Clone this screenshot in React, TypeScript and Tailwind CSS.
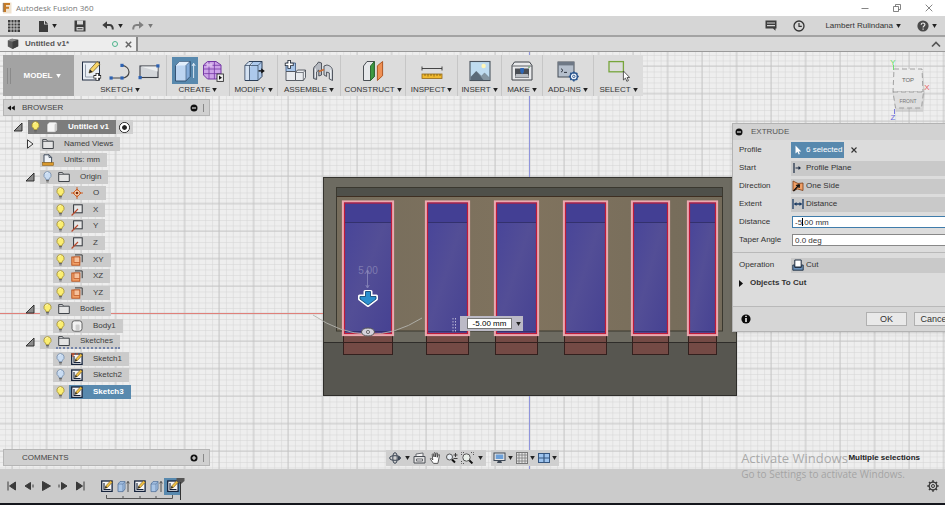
import { useState } from 'react';
import type { ReactNode } from 'react';

type IconProps = { className?: string };

/* ---------- small shared glyphs ---------- */

function Caret({ className = 'text-[#222]' }: IconProps) {
  return (
    <svg viewBox="0 0 5 4" className={`h-1 w-[5px] shrink-0 ${className}`} aria-hidden="true">
      <path d="M0.2 0h4.6L2.5 4z" fill="currentColor" />
    </svg>
  );
}

function Bulb({ on = true }: { on?: boolean }) {
  return (
    <svg viewBox="0 0 9 12" className="h-3 w-[9px]" aria-hidden="true">
      <path
        d="M4.5 0.6a3.6 3.6 0 0 0-2 6.6l.5 1.5h3l.5-1.5a3.6 3.6 0 0 0-2-6.6z"
        fill={on ? '#fbee72' : '#c9dcf2'}
        stroke={on ? '#a08b2c' : '#7089a8'}
        strokeWidth="0.8"
      />
      <path d="M3 2.4a1.6 1.6 0 0 1 1.5-.8" fill="none" stroke="#fff" strokeWidth="0.9" />
      <path d="M3.1 9.5h2.8M3.3 10.9h2.4" stroke="#666" strokeWidth="1" />
    </svg>
  );
}

function Folder() {
  return (
    <svg viewBox="0 0 12 12" className="h-3 w-3" aria-hidden="true">
      <path d="M0.7 10.5V1.6h3.8l1 1.6h5.800v7.300z" fill="#e4e4e4" stroke="#30343a" strokeWidth="0.9" />
      <path d="M1 3.400h4.600" stroke="#30343a" strokeWidth="0.7" />
    </svg>
  );
}

function SketchIcon({ fixed = false }: { fixed?: boolean }) {
  return (
    <svg viewBox="0 0 12 12" className="h-3 w-3" aria-hidden="true">
      <rect x="0.7" y="1" width="10.4" height="10.4" fill="#f5f5f5" stroke="#15233c" strokeWidth="1.3" />
      <path d="M3 3v6.5h6.5" fill="none" stroke="#15233c" strokeWidth="1.1" />
      <path d="M4 8.3l.8-2.4L9.6.7l1.7 1.5L6.4 7.5z" fill="#f4c542" stroke="#6b4a12" strokeWidth="0.6" />
      <path d="M4 8.3l.8-2.4 1.6 1.6z" fill="#222" />
      {fixed && <path d="M0 1h4M2 0v4M5 1h2" stroke="#c8502a" strokeWidth="1.2" />}
    </svg>
  );
}

function BoxIcon() {
  return (
    <svg viewBox="0 0 12 12" className="h-3 w-3" aria-hidden="true">
      <path d="M1 3.4L3.4 1h6l1.8 1V9L9 11.3H1z" fill="#f4f4f4" stroke="#777" strokeWidth="0.7" />
      <path d="M8.6 3.6l2.4-2v7.6l-2.4 2z" fill="#c9c9c9" />
    </svg>
  );
}

function BodyIcon() {
  return (
    <svg viewBox="0 0 12 12" className="h-3 w-3" aria-hidden="true">
      <rect x="1" y="0.8" width="10" height="10.4" rx="2.6" fill="#f2f2f2" stroke="#555" strokeWidth="0.9" />
      <rect x="4.6" y="4.6" width="4" height="5.4" rx="1" fill="#cfcfcf" />
    </svg>
  );
}

function UnitsIcon() {
  return (
    <svg viewBox="0 0 12 12" className="h-3 w-3" aria-hidden="true">
      <path d="M2 9V.8h5L9.6 3.4V9z" fill="#eef2f7" stroke="#2f3b4d" strokeWidth="0.9" />
      <path d="M7 .8v2.6h2.6" fill="none" stroke="#2f3b4d" strokeWidth="0.8" />
      <rect x="0.6" y="8.6" width="10.8" height="2.8" fill="#d9992c" stroke="#8b5f16" strokeWidth="0.6" />
    </svg>
  );
}

function PointIcon() {
  return (
    <svg viewBox="0 0 12 12" className="h-3 w-3" aria-hidden="true">
      <path d="M6 2l4 4-4 4-4-4z" fill="#f6d0ae" stroke="#c9571c" strokeWidth="0.9" />
      <path d="M6 0v4M6 8v4M0 6h4M8 6h4" stroke="#c9571c" strokeWidth="0.9" />
      <circle cx="6" cy="6" r="1.3" fill="#7c2d0c" />
    </svg>
  );
}

function AxisIcon() {
  return (
    <svg viewBox="0 0 12 12" className="h-3 w-3" aria-hidden="true">
      <rect x="2.6" y="0.8" width="8.6" height="8" fill="#e6e6e6" stroke="#30343a" strokeWidth="1" />
      <path d="M0.6 11.5L7 5" stroke="#b9482a" strokeWidth="1.1" />
    </svg>
  );
}

function PlaneIcon() {
  return (
    <svg viewBox="0 0 12 12" className="h-3 w-3" aria-hidden="true">
      <path d="M4 .9h7.2v7.3" fill="none" stroke="#3b3b3b" strokeWidth="1" />
      <rect x="0.8" y="3" width="8" height="8.2" fill="#f1a067" stroke="#b9501c" strokeWidth="0.9" />
      <rect x="3" y="3" width="5.8" height="5.6" fill="#f6c19b" stroke="#b9501c" strokeWidth="0.7" />
    </svg>
  );
}

function ExtrudeSmall() {
  return (
    <svg viewBox="0 0 13 13" className="h-[13px] w-[13px]" aria-hidden="true">
      <path d="M1 4l2-2.4h5V9l-2 2.6H1z" fill="#a9c5e6" stroke="#50719a" strokeWidth="0.8" />
      <path d="M1 4h5v7.4M6 4l2-2.4" fill="none" stroke="#50719a" strokeWidth="0.6" />
      <path d="M11 12V1.6M9.6 3.4L11 1.4l1.4 2" fill="none" stroke="#444" strokeWidth="0.9" />
    </svg>
  );
}

/* ---------- ribbon icons ---------- */

function RibbonSvg({ children }: { children: ReactNode }) {
  return (
    <svg viewBox="0 0 22 24" className="h-6 w-[22px]" aria-hidden="true">
      {children}
    </svg>
  );
}

const createSketch = (
  <RibbonSvg>
    <rect x="1.5" y="3" width="17" height="18" fill="#e9eef4" stroke="#222f45" />
    <path d="M4.5 5.5v12.5H15" fill="none" stroke="#8a94a4" strokeWidth="0.9" />
    <path d="M8 14l1-3.6L16 2.6l3 2.6-7.3 7.7z" fill="#f7d468" stroke="#5c4a1d" strokeWidth="0.7" />
    <path d="M8 14l1-3.4 2.5 2.2z" fill="#222" />
    <path d="M16.3 14v7.6M12.5 17.8h7.6" stroke="#222" strokeWidth="3.4" />
    <path d="M16.3 14.7v6.2M13.2 17.8h6.2" stroke="#fff" strokeWidth="1.8" />
  </RibbonSvg>
);

const lineArc = (
  <RibbonSvg>
    <path d="M2 19h11c4 0 7-2.6 7-6s-3-6-7-6.6" fill="none" stroke="#444" strokeWidth="1.2" />
    <g fill="#2d62b3">
      <rect x="0.5" y="17.4" width="3.2" height="3.2" />
      <rect x="11.4" y="17.4" width="3.2" height="3.2" />
      <rect x="11.4" y="4.8" width="3.2" height="3.2" />
    </g>
  </RibbonSvg>
);

const rectangle = (
  <RibbonSvg>
    <rect x="2" y="7" width="18" height="11.5" fill="#d3d6da" stroke="#3b3f47" strokeWidth="1.1" />
    <path d="M2.6 7.6h17v5z" fill="#eceef0" />
    <rect x="0.5" y="17" width="3.2" height="3.2" fill="#2d62b3" />
    <rect x="18.3" y="5.3" width="3.2" height="3.2" fill="#2d62b3" />
  </RibbonSvg>
);

const extrude = (
  <RibbonSvg>
    <path d="M1.5 6.5L5.5 2.5H16v15l-4 4.5H1.5z" fill="#bdd5f1" stroke="#2c4a6c" strokeWidth="0.9" />
    <path d="M1.8 6.5L5.5 2.8H15.6l-3.6 3.7z" fill="#e2eefb" />
    <path d="M12 6.5v15.4l4-4.5V2.5z" fill="#83abd9" stroke="#2c4a6c" strokeWidth="0.6" />
    <path d="M19.6 19V4.5M18 7l1.6-2.7L21.2 7" fill="none" stroke="#e8f1fa" strokeWidth="0.9" />
  </RibbonSvg>
);

const formIcon = (
  <RibbonSvg>
    <path d="M5.5 2.5h8.5L19 6v9l-4.5 5H5.5L1.5 16V6z" fill="#cda3e8" stroke="#7437a4" strokeWidth="1" strokeLinejoin="round" />
    <path d="M2 10h17M2.2 14.6h16.4M2 6.3h16.6M7 2.6V20M12.4 2.6V20" fill="none" stroke="#7437a4" strokeWidth="0.8" />
    <path d="M4.5 4.6h6v3h-6z" fill="#e5cdf4" opacity="0.8" />
    <rect x="15" y="15" width="6.4" height="7.4" fill="#f0f0f0" stroke="#333" strokeWidth="0.9" />
    <path d="M17 16.6v4.2l3-2.1z" fill="#111" />
  </RibbonSvg>
);

const pressPull = (
  <RibbonSvg>
    <path d="M2 6.5L6 2.5h13v15L15 21.5H2z" fill="#adc9eb" stroke="#2c3f58" strokeWidth="1" />
    <path d="M2.5 6.5L6.2 3H9v3.5L6.4 9v12H2.5z" fill="#d5e2f1" />
    <path d="M2 6.5h13v15M15 6.5l4-4M6.5 6.5V21M6.5 6.5l3.7-4" fill="none" stroke="#2c3f58" strokeWidth="0.7" />
    <path d="M15.5 11.9h3" stroke="#111" strokeWidth="1.4" />
    <path d="M21.8 11.9l-3.6-2.7v5.400z" fill="#111" />
  </RibbonSvg>
);

const newComponent = (
  <RibbonSvg>
    <path d="M2 4h9.5v8.5H2z" fill="#a6c4e8" stroke="#35507a" strokeWidth="0.8" />
    <path d="M2 12.5h9.5V21.5H2z" fill="#e9ebee" stroke="#4b4f57" strokeWidth="0.9" />
    <path d="M11.5 13.5L13.5 11h8v7.5l-2.2 3h-7.8z" fill="#e9ebee" stroke="#4b4f57" strokeWidth="0.9" />
    <path d="M11.5 13.5h7.8v8M19.3 13.5l2.2-2.5" fill="none" stroke="#4b4f57" strokeWidth="0.7" />
    <path d="M5.2 1v8.8M.8 5.4h8.8" stroke="#1d2530" strokeWidth="3.4" />
    <path d="M5.2 1.8V9M1.6 5.4h7.2" stroke="#fff" strokeWidth="1.7" />
  </RibbonSvg>
);

const joint = (
  <RibbonSvg>
    <path d="M1.500 19.500V10C1.500 7 5 6.500 6.500 3l3 1v12l-2.700 1V11L4.600 13v7.500z" fill="#b6bac1" stroke="#444952" strokeWidth="0.9" />
    <path d="M20.500 21.500V12c0-4-3-5.500-5.600-6L12 7v9l2.600 1.400V13l2.700 1v6z" fill="#cfd3d9" stroke="#444952" strokeWidth="0.9" />
    <path d="M7 12.500l5-2" stroke="#d06d30" strokeWidth="1.5" />
    <path d="M3.500 9.500v9M18.500 11v8.500" stroke="#eef0f3" strokeWidth="0.9" />
  </RibbonSvg>
);

const offsetPlane = (
  <RibbonSvg>
    <path d="M1.5 7L5 2.5h7.3v15L8.5 21.5h-7z" fill="#e6e8ea" stroke="#3a3f45" strokeWidth="0.9" />
    <path d="M8.5 7l3.8-4.5v15l-3.8 4z" fill="#3f9a43" stroke="#25632a" strokeWidth="0.9" />
    <path d="M15.4 6.8l5.2-4.3v14.2l-5.2 4.8z" fill="#ef9054" stroke="#a94d18" strokeWidth="0.9" />
  </RibbonSvg>
);

const measure = (
  <RibbonSvg>
    <path d="M1 9.500h20M1 7.500v4M21 7.500v4" stroke="#333" strokeWidth="0.9" />
    <rect x="1" y="15" width="20" height="4.500" fill="#f0b92f" stroke="#91681a" strokeWidth="0.8" />
    <path d="M4 15v2M7 15v2.500M10 15v2M13 15v2.500M16 15v2M19 15v2" stroke="#6b4b0e" strokeWidth="0.7" />
  </RibbonSvg>
);

const insertImage = (
  <RibbonSvg>
    <rect x="1" y="2.5" width="20" height="19" fill="#bfdcf0" stroke="#4a545e" strokeWidth="1.1" />
    <circle cx="14.6" cy="7" r="2.2" fill="#fff6b8" />
    <path d="M1.6 18l5.6-6 5.3 5 3-3.2 5 5V21H1.6z" fill="#5a6b79" />
    <path d="M7.2 12l5.3 5 3-3.200 5 5V21h-6z" fill="#8596a2" />
  </RibbonSvg>
);

const printer = (
  <RibbonSvg>
    <path d="M3.5 3h15L21 6.5V21H1V6.5z" fill="#e9eaec" stroke="#3e4248" strokeWidth="1" />
    <path d="M1.2 7h19.6" stroke="#3e4248" strokeWidth="0.8" />
    <path d="M4 9.5h14V19H4z" fill="#4a4e55" />
    <path d="M5 15h12l1 3.4H4z" fill="#b9bdc3" />
    <path d="M9.3 9h3.6v4l-1.8 2.2L9.3 13z" fill="#2e67b8" />
    <circle cx="18" cy="8.3" r="0.7" fill="#4aa04a" />
  </RibbonSvg>
);

const addins = (
  <RibbonSvg>
    <rect x="1" y="3" width="16" height="15" fill="#b5bfcc" stroke="#454c57" />
    <rect x="1" y="3" width="16" height="3.4" fill="#6e7885" />
    <path d="M4 9.6l2 1.8-2 1.8M7 13.4h3" fill="none" stroke="#1d232b" strokeWidth="0.9" />
    <circle cx="16.8" cy="17.4" r="3.6" fill="#eef3fa" stroke="#2b568f" strokeWidth="1.5" />
    <circle cx="16.8" cy="17.4" r="1.2" fill="none" stroke="#2b568f" strokeWidth="0.9" />
    <path d="M16.8 12.4v2M16.8 20.4v2M11.8 17.4h2M19.8 17.4h2M13.3 13.9l1.3 1.3M19 19.6l1.3 1.3M13.3 20.9l1.3-1.3M19 15.2l1.3-1.3" stroke="#2b568f" strokeWidth="1.5" />
  </RibbonSvg>
);

const selectIcon = (
  <RibbonSvg>
    <rect x="1" y="2.6" width="14.4" height="10.2" fill="none" stroke="#77a53c" strokeWidth="1.3" />
    <path d="M15.4 12v9l2.1-1.9 1.3 3.2 1.6-.7-1.3-3.1h2.6z" fill="#fff" stroke="#333" strokeWidth="0.8" />
  </RibbonSvg>
);

type Tool = { name: string; icon: ReactNode; active?: boolean };
type Group = { label: string; width: string; tools: Tool[] };

const groups: Group[] = [
  {
    label: 'SKETCH',
    width: 'w-[93px]',
    tools: [
      { name: 'Create sketch', icon: createSketch },
      { name: 'Line', icon: lineArc },
      { name: 'Rectangle', icon: rectangle },
    ],
  },
  {
    label: 'CREATE',
    width: 'w-[63px]',
    tools: [
      { name: 'Extrude', icon: extrude, active: true },
      { name: 'Create form', icon: formIcon },
    ],
  },
  { label: 'MODIFY', width: 'w-12', tools: [{ name: 'Press pull', icon: pressPull }] },
  {
    label: 'ASSEMBLE',
    width: 'w-[63px]',
    tools: [
      { name: 'New component', icon: newComponent },
      { name: 'Joint', icon: joint },
    ],
  },
  { label: 'CONSTRUCT', width: 'w-[65px]', tools: [{ name: 'Offset plane', icon: offsetPlane }] },
  { label: 'INSPECT', width: 'w-[52px]', tools: [{ name: 'Measure', icon: measure }] },
  { label: 'INSERT', width: 'w-11', tools: [{ name: 'Insert image', icon: insertImage }] },
  { label: 'MAKE', width: 'w-[41px]', tools: [{ name: '3D print', icon: printer }] },
  { label: 'ADD-INS', width: 'w-[51px]', tools: [{ name: 'Scripts', icon: addins }] },
  { label: 'SELECT', width: 'w-[49px]', tools: [{ name: 'Window selection', icon: selectIcon }] },
];

/* ---------- browser tree ---------- */

type Node = {
  label: string;
  indent: string;
  toggle?: 'open' | 'closed';
  bulb?: 'on' | 'off';
  icon: ReactNode;
  state?: 'root' | 'selected' | 'pending';
};

const nodes: Node[] = [
  { label: 'Untitled v1', indent: 'pl-2.5', toggle: 'open', bulb: 'on', icon: <BoxIcon />, state: 'root' },
  { label: 'Named Views', indent: 'pl-[22px]', toggle: 'closed', icon: <Folder /> },
  { label: 'Units: mm', indent: 'pl-[22px]', icon: <UnitsIcon /> },
  { label: 'Origin', indent: 'pl-[22px]', toggle: 'open', bulb: 'off', icon: <Folder /> },
  { label: 'O', indent: 'pl-[35px]', bulb: 'on', icon: <PointIcon /> },
  { label: 'X', indent: 'pl-[35px]', bulb: 'on', icon: <AxisIcon /> },
  { label: 'Y', indent: 'pl-[35px]', bulb: 'on', icon: <AxisIcon /> },
  { label: 'Z', indent: 'pl-[35px]', bulb: 'on', icon: <AxisIcon /> },
  { label: 'XY', indent: 'pl-[35px]', bulb: 'on', icon: <PlaneIcon /> },
  { label: 'XZ', indent: 'pl-[35px]', bulb: 'on', icon: <PlaneIcon /> },
  { label: 'YZ', indent: 'pl-[35px]', bulb: 'on', icon: <PlaneIcon /> },
  { label: 'Bodies', indent: 'pl-[22px]', toggle: 'open', bulb: 'on', icon: <Folder /> },
  { label: 'Body1', indent: 'pl-[35px]', bulb: 'on', icon: <BodyIcon /> },
  { label: 'Sketches', indent: 'pl-[22px]', toggle: 'open', bulb: 'on', icon: <Folder />, state: 'pending' },
  { label: 'Sketch1', indent: 'pl-[35px]', bulb: 'off', icon: <SketchIcon fixed /> },
  { label: 'Sketch2', indent: 'pl-[35px]', bulb: 'off', icon: <SketchIcon /> },
  { label: 'Sketch3', indent: 'pl-[35px]', bulb: 'on', icon: <SketchIcon />, state: 'selected' },
];

function TreeRow({ node }: { node: Node }) {
  const root = node.state === 'root';
  const selected = node.state === 'selected';
  return (
    <li className={`flex h-3.5 items-center ${node.indent}`}>
      <span className="flex w-[15px] shrink-0">
        {node.toggle && (
          <button aria-label={`Toggle ${node.label}`}>
            <svg viewBox="0 0 10 10" className="h-2.5 w-2.5" aria-hidden="true">
              {node.toggle === 'open' ? (
                <path d="M9 1v8H1z" fill="#8b8b8b" stroke="#222" strokeWidth="0.9" />
              ) : (
                <path d="M2.5 0.8v8.4L8 5z" fill="#f2f2f2" stroke="#222" strokeWidth="0.9" />
              )}
            </svg>
          </button>
        )}
      </span>
      <span className={`flex h-3.5 items-center ${root ? 'bg-[#7c7c7c]' : 'bg-[#cbcbcb]'}`}>
        {node.bulb && (
          <button aria-label={`Show or hide ${node.label}`} className="pr-1 pl-[3px]">
            <Bulb on={node.bulb === 'on'} />
          </button>
        )}
        <span
          className={`flex h-3.5 items-center gap-2.5 pr-[7px] pl-0.5 ${selected ? 'bg-[#5889ae] font-bold text-white' : ''} ${
            root ? 'font-bold text-white' : ''
          } ${node.state === 'pending' ? 'border-b-2 border-dotted border-[#7383a8]' : ''}`}
        >
          {node.icon}
          {node.label}
        </span>
      </span>
      {root && (
        <label className="flex h-3.5 items-center bg-[#d0d0d0] px-[3px]">
          <input
            type="radio"
            defaultChecked
            aria-label="Activate component"
            className="h-[11px] w-[11px] appearance-none rounded-full border border-[#222] bg-[#222] bg-clip-content p-0.5 outline-2 -outline-offset-3 outline-white"
          />
        </label>
      )}
    </li>
  );
}

function PanelBar({ title, open }: { title: string; open: boolean }) {
  return (
    <div className="flex h-[17px] w-[207px] items-center border border-[#b5b5b5] bg-[#d0d0d0] pr-1 text-[8px] text-[#444]">
      <span className="flex w-[18px] pl-[3px]">
        {open && (
          <button aria-label="Collapse browser">
            <svg viewBox="0 0 8 6" className="h-1.5 w-2" aria-hidden="true">
              <path d="M4 0.5v5L0.4 3zM7.8 0.5v5L4.2 3z" fill="#111" />
            </svg>
          </button>
        )}
      </span>
      <h2 className="flex-1">{title}</h2>
      <button aria-label={open ? 'Hide panel' : 'Add comment'} className="mr-[5px]">
        <svg viewBox="0 0 8 8" className="h-2 w-2" aria-hidden="true">
          <circle cx="4" cy="4" r="3.500" fill="#111" />
          <path d={open ? 'M2 4h4' : 'M2 4h4M4 2v4'} stroke="#eee" strokeWidth="1.100" />
        </svg>
      </button>
      <span className="mr-px h-2 w-px bg-[#888]" />
    </div>
  );
}

/* ---------- canvas ---------- */

const slots = [
  { x: 343, w: 50 },
  { x: 426, w: 43 },
  { x: 495, w: 43 },
  { x: 564, w: 43 },
  { x: 632, w: 37 },
  { x: 688, w: 29 },
];

function Viewport() {
  return (
    <svg className="absolute inset-0 h-full w-full" role="img" aria-label="Model viewport">
      <defs>
        <pattern id="minor" x="12" y="14" width="6.9" height="5.5" patternUnits="userSpaceOnUse">
          <path d="M0 0h6.9M0 0v5.5" stroke="#d4d4d4" strokeWidth="1" fill="none" />
        </pattern>
        <pattern id="major" x="11" y="13" width="34.5" height="27.5" patternUnits="userSpaceOnUse">
          <path d="M1 0v27.5M0 1h34.5" stroke="#c2c2c2" strokeWidth="0.8" fill="none" />
        </pattern>
        <linearGradient id="slot" x1="0" y1="0" x2="1" y2="1">
          <stop offset="0" stopColor="#46439a" />
          <stop offset="0.5" stopColor="#534e96" />
          <stop offset="1" stopColor="#454192" />
        </linearGradient>
        <linearGradient id="wall" x1="0" y1="0" x2="1" y2="0">
          <stop offset="0" stopColor="#766d5c" />
          <stop offset="0.5" stopColor="#80735e" />
          <stop offset="1" stopColor="#746b5a" />
        </linearGradient>
      </defs>
      <rect width="100%" height="100%" fill="#eeeeee" />
      <rect width="100%" height="100%" fill="url(#minor)" />
      <rect width="100%" height="100%" fill="url(#major)" />
      <rect x="0" y="261" width="100%" height="1" fill="#e0807a" />
      <rect x="529" y="0" width="1" height="100%" fill="#8f95dc" />

      {/* body */}
      <rect x="323.5" y="125.5" width="413" height="218" fill="#6d6b61" stroke="#35342f" />
      <rect x="336.5" y="135.5" width="386" height="143.5" fill="url(#wall)" stroke="#3a382f" />
      <rect x="337" y="136" width="385" height="8.5" fill="#4f504a" />
      <path d="M337 144.5h385" stroke="#3e2f22" />
      <rect x="323.5" y="290.5" width="413" height="53" fill="#575650" stroke="#2e2d2a" />

      {slots.map(s => (
        <g key={s.x}>
          <rect x={s.x + 0.5} y="283" width={s.w - 1} height="19.5" fill="#744a45" stroke="#33201e" />
          <path d={`M${s.x} 290.5h${s.w}`} stroke="#33201e" />
          <rect x={s.x} y="149.5" width={s.w} height="133.5" fill="url(#slot)" />
          <rect x={s.x} y="149.5" width={s.w} height="20.5" fill="#433f94" />
          <path d={`M${s.x} 170.5h${s.w}M${s.x} 279.5h${s.w}`} stroke="#33316e" />
          <rect x={s.x} y="149.5" width={s.w} height="133.5" fill="none" stroke="#e9a9b0" strokeWidth="2.2" />
          <rect x={s.x + 1.5} y="151" width={s.w - 3} height="130.5" fill="none" stroke="#c01b3a" strokeWidth="1.2" />
        </g>
      ))}

      {/* extrude manipulator */}
      <path d="M313 263Q368 300 422 266" fill="none" stroke="#b3b3ae" strokeWidth="0.9" />
      <text x="368" y="222" textAnchor="middle" fontSize="10" fill="#7f7bb0" fontFamily="Liberation Sans, sans-serif">
        5.00
      </text>
      <path d="M367.5 219v16M365.8 221l1.7-3 1.7 3M365.8 233l1.7 3 1.7-3" fill="none" stroke="#8e8bbd" strokeWidth="0.8" />
      <path
        d="M365 239.500h6v4.500h5.500v3l-8.500 6.500-8.500-6.500v-3h5.500z"
        fill="#2a8fce"
        stroke="#fff"
        strokeWidth="3"
        strokeLinejoin="round"
      />
      <path d="M365.500 239.500h5v5h5.500v2.500l-8 6-8-6v-2.500h5.500z" fill="#2a8fce" stroke="#124b78" strokeWidth="0.9" />
      <ellipse cx="368" cy="280" rx="6.5" ry="4" fill="#d5d3dd" stroke="#555" />
      <circle cx="368" cy="280" r="1.6" fill="none" stroke="#555" strokeWidth="0.8" />
      <path d="M453 266v14M455.5 266v14" stroke="#b9b6d6" strokeDasharray="1.5 1.5" />
    </svg>
  );
}

function ViewCube() {
  return (
    <svg viewBox="0 0 50 66" className="absolute top-1 right-2.5 h-[66px] w-[50px]" role="img" aria-label="View cube">
      <path d="M9 13h28l2 23-2 18H10L7 36z" fill="#aaa" opacity="0.35" transform="translate(1 2)" />
      <path d="M9 13h28l1 23H8z" fill="#ebebeb" stroke="#999" strokeDasharray="5 3" strokeWidth="0.9" />
      <path d="M8 36h30.500l-2 16h-26z" fill="#dfdfdf" stroke="#999" strokeDasharray="5 3" strokeWidth="0.9" />
      <g fontFamily="Liberation Sans, sans-serif" textAnchor="middle">
        <text x="23" y="26" fontSize="6" fill="#666">TOP</text>
        <text x="23" y="47" fontSize="5" fill="#777">FRONT</text>
        <text x="8" y="9" fontSize="8" fill="#5fe05f">Y</text>
        <text x="42" y="34" fontSize="8" fill="#e86060">X</text>
        <text x="8" y="64" fontSize="8" fill="#6868dc">Z</text>
      </g>
      <path d="M8.5 9v5" stroke="#6fe06f" />
      <path d="M9.5 53v5" stroke="#7878dc" />
    </svg>
  );
}

/* ---------- extrude dialog ---------- */

const startIcon = (
  <svg viewBox="0 0 12 12" className="h-3 w-3" aria-hidden="true">
    <path d="M2 1v10M3.500 6H8" stroke="#1c2c44" strokeWidth="1.2" />
    <path d="M9 6L6.500 4v4z" fill="#1c2c44" />
  </svg>
);

const directionIcon = (
  <svg viewBox="0 0 12 12" className="h-3 w-3" aria-hidden="true">
    <path d="M1 1l5 2.5L11 3v7.5L5.5 9 1 11z" fill="#f0a067" stroke="#7c3b13" strokeWidth="0.8" />
    <path d="M1.5 11L7 5M7.5 4.5L4 5.5M7.5 4.5L7 8" stroke="#111" strokeWidth="1.3" />
  </svg>
);

const extentIcon = (
  <svg viewBox="0 0 12 12" className="h-3 w-3" aria-hidden="true">
    <path d="M1 1v10M11 1v10M2.5 6h7" stroke="#1c3c64" strokeWidth="1.3" />
    <path d="M2 6l2.5-2v4zM10 6L7.5 4v4z" fill="#1c3c64" />
  </svg>
);

const cutIcon = (
  <svg viewBox="0 0 12 12" className="h-3 w-3" aria-hidden="true">
    <path d="M0.8 6h2v2.5h6.4V6h2v5.2H0.8z" fill="#6d93bd" stroke="#1d2c40" strokeWidth="0.9" />
    <path d="M2.8 1h6.4v7H2.8z" fill="#fff" stroke="#1d2c40" strokeWidth="1" />
  </svg>
);

function SelectRow({ id, label, value, icon }: { id: string; label: string; value: string; icon: ReactNode }) {
  return (
    <div className="flex h-[18px] items-center">
      <label htmlFor={id} className="w-[52px] shrink-0">{label}</label>
      <div className="flex h-[15px] flex-1 items-center gap-0.5 bg-[#c9c9c9] pl-px">
        {icon}
        <select id={id} className="h-full flex-1 appearance-none bg-transparent outline-none">
          <option>{value}</option>
        </select>
      </div>
    </div>
  );
}

function ExtrudePanel({ distance, onDistance }: { distance: string; onDistance: (v: string) => void }) {
  return (
    <section className="mt-[27px] -mr-[19px] h-fit w-[232px] border border-[#b3b3b3] bg-[#dcdcdc] text-[8px] text-[#333] shadow-sm">
      <header className="flex h-4 items-center gap-2 bg-[#d2d2d2] pl-0.5">
        <button aria-label="Collapse extrude">
          <svg viewBox="0 0 8 8" className="h-2 w-2" aria-hidden="true">
            <circle cx="4" cy="4" r="3.5" fill="#111" />
            <path d="M2 4h4" stroke="#eee" strokeWidth="1.1" />
          </svg>
        </button>
        <h2 className="text-[#555]">EXTRUDE</h2>
      </header>
      <div className="pt-px pr-2 pb-[3px] pl-1.5">
        <div className="flex h-[18px] items-center">
          <span className="w-[52px] shrink-0">Profile</span>
          <button className="flex h-4 w-[53px] items-center gap-1 bg-[#5889ae] pl-1 text-white">
            <svg viewBox="0 0 7 10" className="h-2.5 w-[7px]" aria-hidden="true">
              <path d="M0.5 0.5v8l2-1.7 1.2 2.7 1.2-.6-1.2-2.5h2.6z" fill="#fff" />
            </svg>
            6 selected
          </button>
          <button aria-label="Clear selection" className="ml-[7px]">
            <svg viewBox="0 0 6 6" className="h-1.5 w-1.5" aria-hidden="true">
              <path d="M0.5 0.5l5 5M5.5 0.5l-5 5" stroke="#333" strokeWidth="1.1" />
            </svg>
          </button>
        </div>
        <SelectRow id="start" label="Start" value="Profile Plane" icon={startIcon} />
        <SelectRow id="direction" label="Direction" value="One Side" icon={directionIcon} />
        <SelectRow id="extent" label="Extent" value="Distance" icon={extentIcon} />
        <div className="flex h-[18px] items-center">
          <label htmlFor="distance" className="w-[53px] shrink-0">Distance</label>
          <div className="relative flex flex-1">
            <input
              id="distance"
              value={distance}
              onChange={e => onDistance(e.target.value)}
              className="h-3 w-full border border-[#3f7cab] bg-white px-0.5 outline-none"
            />
            <span className="absolute top-0.5 left-2.5 h-2 w-px bg-black" />
          </div>
        </div>
        <div className="flex h-[18px] items-center">
          <label htmlFor="taper" className="w-[53px] shrink-0">Taper Angle</label>
          <input id="taper" defaultValue="0.0 deg" className="h-3 w-full flex-1 border border-[#888] bg-white px-0.5 outline-none" />
        </div>
      </div>
      <div className="border-t border-[#b9b9b9] pt-[3px] pr-2 pl-1.5">
        <SelectRow id="operation" label="Operation" value="Cut" icon={cutIcon} />
        <button className="flex h-[18px] items-center gap-[7px] font-bold">
          <svg viewBox="0 0 4 7" className="h-[7px] w-1" aria-hidden="true">
            <path d="M0 0l4 3.5L0 7z" fill="#111" />
          </svg>
          Objects To Cut
        </button>
      </div>
      <footer className="mt-3.5 flex h-[25px] items-center gap-[7px] border-t border-[#b9b9b9] bg-[#d6d6d6] pr-2 pl-2">
        <button aria-label="Info" className="mr-auto">
          <svg viewBox="0 0 10 10" className="h-2.5 w-2.5" aria-hidden="true">
            <circle cx="5" cy="5" r="4.6" fill="#0b0b0b" />
            <path d="M5 1.8v1.3M5 4v4" stroke="#fff" strokeWidth="1.5" />
          </svg>
        </button>
        <button className="h-3.5 w-[41px] border border-[#b0b0b0] bg-[#e9e9e9] text-[9px]">OK</button>
        <button className="h-3.5 w-[41px] border border-[#b0b0b0] bg-[#e9e9e9] text-[9px]">Cancel</button>
      </footer>
    </section>
  );
}

/* ---------- bottom bars ---------- */

function NavTools() {
  return (
    <div className="flex h-4 gap-[5px]">
      <div className="flex items-center gap-[3px] bg-[#cfcfcf] px-[3px]">
        <button aria-label="Orbit" className="flex items-center gap-1">
          <svg viewBox="0 0 12 12" className="h-3 w-3" fill="none" stroke="#3c4654" aria-hidden="true">
            <ellipse cx="6" cy="6" rx="5.3" ry="2.3" />
            <ellipse cx="6" cy="6" rx="2.2" ry="5.3" />
            <path d="M9 4.5l2.5 1.5L9 8" fill="#3c4654" />
          </svg>
          <Caret />
        </button>
        <button aria-label="Look at">
          <svg viewBox="0 0 13 12" className="h-3 w-[13px]" aria-hidden="true">
            <path d="M1 4.5h11v6.5H1z" fill="#e2e2e2" stroke="#4b4f55" />
            <path d="M3 4V2l7-1v3M3.5 7h6v2h-6z" fill="#f4f4f4" stroke="#4b4f55" strokeWidth="0.8" />
          </svg>
        </button>
        <button aria-label="Pan">
          <svg viewBox="0 0 12 12" className="h-3 w-[13px]" aria-hidden="true">
            <path
              d="M4 11.4L.9 7.2c-.4-.9.6-1.2 1.1-.6L3.300 8 2.700 2.600c0-.8 1-.9 1.200-.2L4.600 5V1.200c0-.8 1.100-.8 1.200 0L6.100 5l.7-3.700c.2-.8 1.200-.6 1.200.2L7.800 5.300l1.100-2.500c.4-.7 1.300-.4 1.100.4L8.900 9l-.6 2.400z"
              fill="#fff"
              stroke="#333"
              strokeWidth="0.8"
            />
          </svg>
        </button>
        <button aria-label="Zoom">
          <svg viewBox="0 0 13 12" className="h-3 w-[13px]" aria-hidden="true">
            <circle cx="4.5" cy="5" r="3" fill="#e8eef4" stroke="#555" />
            <path d="M7 7.5l3 3" stroke="#111" strokeWidth="2" />
            <path d="M10.5 1v4M8.5 3h4M8.5 6.5h4" stroke="#333" strokeWidth="0.9" />
          </svg>
        </button>
        <button aria-label="Fit" className="flex items-center gap-1">
          <svg viewBox="0 0 13 12" className="h-3 w-[13px]" aria-hidden="true">
            <path d="M0.5 3V.5H3M10 .5h2.5V3M.5 9v2.5H3" fill="none" stroke="#555" strokeDasharray="1 1" />
            <circle cx="5.5" cy="5.5" r="3.7" fill="#eaf0ea" stroke="#555" />
            <path d="M8.4 8.4l3 3" stroke="#111" strokeWidth="2" />
          </svg>
          <Caret />
        </button>
      </div>
      <div className="flex items-center gap-[3px] bg-[#cfcfcf] px-0.5">
        <button aria-label="Display settings" className="flex items-center gap-0.5">
          <svg viewBox="0 0 13 12" className="h-3 w-[13px]" aria-hidden="true">
            <rect x="1" y="1" width="11" height="7.5" fill="#e8e8e8" stroke="#3f4956" />
            <rect x="2.7" y="2.5" width="7.6" height="4.5" fill="#6da0d8" />
            <path d="M4 11h5L8 8.5H5z" fill="#3f4956" />
          </svg>
          <Caret />
        </button>
        <button aria-label="Grid settings" className="flex items-center gap-0.5">
          <svg viewBox="0 0 12 12" className="h-3 w-3" aria-hidden="true">
            <rect x="0.5" y="0.5" width="11" height="11" fill="#e4e4e4" stroke="#777" />
            <path d="M3 0v12M6 0v12M9 0v12M0 3h12M0 6h12M0 9h12" stroke="#7b7b7b" strokeWidth="0.8" />
          </svg>
          <Caret />
        </button>
        <button aria-label="Viewports" className="flex items-center gap-0.5">
          <svg viewBox="0 0 12 12" className="h-3 w-3" aria-hidden="true">
            <rect x="0.5" y="1.5" width="11" height="9" fill="#9dc3ee" stroke="#35567f" />
            <path d="M6 1.5v9M.5 6h11" stroke="#35567f" strokeWidth="1.2" />
          </svg>
          <Caret />
        </button>
      </div>
    </div>
  );
}

const playback = [
  { name: 'Go to start', d: 'M2 1.500v9M9.500 2v8L3.500 6z' },
  { name: 'Step back', d: 'M7.500 2.500v7L2 6zM10 4.500v3' },
  { name: 'Play', d: 'M2.500 1.500v9L10.500 6z' },
  { name: 'Step forward', d: 'M4.500 2.500v7L10 6zM2 4.500v3' },
  { name: 'Go to end', d: 'M10 1.500v9M2.500 2v8l6-4z' },
];

function Timeline() {
  return (
    <footer className="flex h-9 items-center border-b-2 border-[#14161c] bg-[#cbcbcb] pr-1.5 pl-1.5">
      <div className="flex gap-[5px]">
        {playback.map(p => (
          <button key={p.name} aria-label={p.name}>
            <svg viewBox="0 0 12 12" className="h-3 w-3" aria-hidden="true">
              <path d={p.d} fill="#3a3a3a" stroke="#3a3a3a" strokeWidth="1" />
            </svg>
          </button>
        ))}
      </div>
      <div className="relative ml-3 flex items-center">
        <button aria-label="Sketch1 feature" className="flex w-[17px] justify-center"><SketchIcon /></button>
        <button aria-label="Extrude1 feature" className="flex w-4 justify-center"><ExtrudeSmall /></button>
        <button aria-label="Sketch2 feature" className="flex w-[17px] justify-center"><SketchIcon /></button>
        <button aria-label="Extrude2 feature" className="flex w-4 justify-center"><ExtrudeSmall /></button>
        <button aria-label="Sketch3 feature" className="flex h-[17px] w-[17px] items-center justify-center bg-[#5889ae]">
          <SketchIcon />
        </button>
        <svg viewBox="0 0 88 24" className="pointer-events-none absolute top-0 left-0 h-6 w-[88px]" aria-hidden="true">
          <path d="M8.5 17v3.5h66V17M25 18v2.5M42 18v2.5M58 18v2.5" fill="none" stroke="#555" />
          <path d="M78.5 0h8v3l-3.5 3h-1l-3.5-3z" fill="#555" />
          <path d="M82.5 4v18" stroke="#333" />
        </svg>
      </div>
      <button aria-label="Timeline settings" className="ml-auto">
        <svg viewBox="0 0 12 12" className="h-3 w-3" fill="none" stroke="#3a3a3a" aria-hidden="true">
          <circle cx="6" cy="6" r="3.8" strokeWidth="1.3" />
          <circle cx="6" cy="6" r="1.5" strokeWidth="1" />
          <path d="M6 .3v2M6 9.7v2M.3 6h2M9.7 6h2M2 2l1.4 1.4M8.6 8.6L10 10M2 10l1.4-1.4M8.6 3.4L10 2" strokeWidth="1.6" />
        </svg>
      </button>
    </footer>
  );
}

/* ---------- window chrome ---------- */

function TitleBar() {
  return (
    <header className="flex h-4 items-center bg-white px-0.5 font-['Open_Sans',sans-serif]">
      <svg viewBox="0 0 10 12" className="h-3 w-2.5" aria-hidden="true">
        <rect x="1" y="0.5" width="8.5" height="11" fill="#f1e3cf" />
        <path d="M3 10V2h5M3 5.8h4" fill="none" stroke="#c67b28" strokeWidth="2" />
        <path d="M1.3 1v9" stroke="#6b4a2c" strokeWidth="0.8" />
      </svg>
      <h1 className="ml-1 flex-1 text-[8px] text-[#777]">Autodesk Fusion 360</h1>
      <div className="flex gap-6 pr-2.5">
        <button aria-label="Minimize">
          <svg viewBox="0 0 8 8" className="h-2 w-2" aria-hidden="true">
            <path d="M0.5 4.5h7" stroke="#666" strokeWidth="0.8" />
          </svg>
        </button>
        <button aria-label="Restore">
          <svg viewBox="0 0 8 8" className="h-2 w-2" fill="none" stroke="#666" strokeWidth="0.8" aria-hidden="true">
            <path d="M0.5 2.5h5v5h-5zM2.5 2.5v-2h5v5h-2" />
          </svg>
        </button>
        <button aria-label="Close">
          <svg viewBox="0 0 8 8" className="h-2 w-2" aria-hidden="true">
            <path d="M0.7 0.7l6.6 6.6M7.3 0.7L0.7 7.3" stroke="#666" strokeWidth="0.8" />
          </svg>
        </button>
      </div>
    </header>
  );
}

function AppBar() {
  return (
    <div className="flex h-[21px] items-center border-b-2 border-[#a3a3a3] bg-[#d6d6d6] pr-2 pl-2 text-[8px] text-[#333]">
      <button aria-label="Show data panel">
        <svg viewBox="0 0 12 12" className="h-3 w-3" aria-hidden="true">
          <path d="M0 0h12v12H0z" fill="#3d3d3d" />
          <path d="M3 0v12M6 0v12M9 0v12M0 3h12M0 6h12M0 9h12" stroke="#d6d6d6" strokeWidth="0.9" />
        </svg>
      </button>
      <button aria-label="File" className="ml-[18px] flex items-center gap-[3px]">
        <svg viewBox="0 0 11 12" className="h-3 w-[11px]" aria-hidden="true">
          <path d="M1 1h5v3.6h4V12H1z" fill="#3d3d3d" />
          <path d="M7 0.8l3 3H7z" fill="#3d3d3d" />
        </svg>
        <Caret />
      </button>
      <button aria-label="Save" className="ml-[17px]">
        <svg viewBox="0 0 12 12" className="h-3 w-3" aria-hidden="true">
          <path d="M0.5 0.5h11v11h-11z" fill="#3d3d3d" />
          <path d="M3 0.5h6v4H3zM2.5 7h7v3.5h-7z" fill="#d6d6d6" />
          <path d="M3.5 8.7h5" stroke="#3d3d3d" />
        </svg>
      </button>
      <button aria-label="Undo" className="ml-4 flex items-center gap-1 text-[#3d3d3d]">
        <svg viewBox="0 0 12 12" className="h-3 w-3" aria-hidden="true">
          <path d="M0.3 5L5 1.2v7.6z" fill="currentColor" />
          <path d="M4 5h3.5c2.2 0 3.3 1.5 3.3 4.5" fill="none" stroke="currentColor" strokeWidth="2" />
        </svg>
        <Caret />
      </button>
      <button aria-label="Redo" className="ml-[9px] flex items-center gap-1 text-[#808080]">
        <svg viewBox="0 0 12 12" className="h-3 w-3" aria-hidden="true">
          <path d="M11.7 5L7 1.2v7.6z" fill="currentColor" />
          <path d="M8 5H4.5C2.3 5 1.2 6.5 1.2 9.5" fill="none" stroke="currentColor" strokeWidth="2" />
        </svg>
        <Caret className="text-[#777]" />
      </button>
      <div className="ml-auto flex items-center">
        <button aria-label="Comments">
          <svg viewBox="0 0 12 11" className="h-[11px] w-3" aria-hidden="true">
            <path d="M0.5 0.5h11v8h-1v2.3L8 8.5H.5z" fill="#3d3d3d" />
            <path d="M2 3h8M2 5.6h8" stroke="#d6d6d6" strokeWidth="1.1" />
          </svg>
        </button>
        <button aria-label="Job status" className="ml-4">
          <svg viewBox="0 0 12 12" className="h-3 w-3" fill="none" stroke="#333" aria-hidden="true">
            <circle cx="6" cy="6" r="5" strokeWidth="1.3" />
            <path d="M6 3v3.3h2.8" strokeWidth="1.2" />
          </svg>
        </button>
        <button className="ml-5 flex items-center gap-[3px]">
          Lambert Rulindana <Caret />
        </button>
        <button aria-label="Help" className="ml-4 flex items-center gap-[3px]">
          <svg viewBox="0 0 12 12" className="h-3 w-3" aria-hidden="true">
            <circle cx="6" cy="6" r="5.6" fill="#4a4a4a" />
            <path d="M4.2 4.8c0-2.4 3.7-2.3 3.7-.2 0 1.4-1.8 1.4-1.8 2.8M6.1 8.4v1.3" fill="none" stroke="#e6e6e6" strokeWidth="1.2" />
          </svg>
          <Caret />
        </button>
      </div>
    </div>
  );
}

function TabStrip() {
  return (
    <nav className="flex h-[15px] items-center border-b border-[#999] bg-[#d9d9d9] pr-1">
      <div className="flex h-full w-[138px] items-center border-r-2 border-[#888] bg-[#ededed] pl-[7px] text-[8px]">
        <svg viewBox="0 0 12 12" className="h-3 w-3" aria-hidden="true">
          <path d="M0.8 2.5L5 .8l6.2 1v6.4L5.5 11 .8 8.5z" fill="#5a5a5a" />
          <path d="M0.8 2.5L5 .8l6.2 1-5.7 2z" fill="#8a8a8a" />
          <path d="M5.5 3.8l5.7-2v6.4L5.5 11z" fill="#404040" />
        </svg>
        <a href="#untitled" className="ml-1.5 flex-1 font-bold text-[#555]">Untitled v1*</a>
        <svg viewBox="0 0 8 8" className="h-2 w-2" aria-hidden="true">
          <circle cx="4" cy="4" r="2.5" fill="none" stroke="#4db48c" />
        </svg>
        <button aria-label="Close tab" className="mr-1 ml-1.5">
          <svg viewBox="0 0 7 7" className="h-[7px] w-[7px]" aria-hidden="true">
            <path d="M0.8 0.8l5.4 5.4M6.2 0.8L.8 6.2" stroke="#666" strokeWidth="1.5" />
          </svg>
        </button>
      </div>
      <button aria-label="Collapse toolbar" className="ml-auto">
        <svg viewBox="0 0 10 8" className="h-2 w-2.5" aria-hidden="true">
          <path d="M1 6.5l4-4 4 4" fill="none" stroke="#555" strokeWidth="1.7" />
        </svg>
      </button>
    </nav>
  );
}

function Ribbon() {
  return (
    <div className="flex h-[41px] w-fit bg-[#dcdcdc] text-[8px] text-[#333]">
      <button className="flex w-[71px] items-center bg-[#a3a3a3] pl-1 font-bold text-white">
        <span className="h-4 w-1 border-x border-[#8a8a8a]" />
        <span className="flex flex-1 items-center justify-center gap-1">
          MODEL <Caret className="text-white" />
        </span>
      </button>
      {groups.map(g => (
        <div key={g.label} className={`flex flex-col items-center border-r border-[#c6c6c6] pt-0.5 last:border-r-0 ${g.width}`}>
          <div className="flex w-full justify-evenly">
            {g.tools.map(t => (
              <button
                key={t.name}
                aria-label={t.name}
                className={`flex h-[27px] items-center justify-center ${t.active ? 'w-[26px] bg-[#5889ae]' : 'w-[22px]'}`}
              >
                {t.icon}
              </button>
            ))}
          </div>
          <button className="flex h-[11px] items-center gap-0.5">
            {g.label} <Caret />
          </button>
        </div>
      ))}
    </div>
  );
}

export default function App() {
  const [distance, setDistance] = useState('-5.00 mm');

  return (
    <div className="relative flex min-h-screen flex-col overflow-hidden font-['Liberation_Sans',Arial,sans-serif] leading-none">
      <TitleBar />
      <AppBar />
      <TabStrip />
      <main className="relative flex flex-1 flex-col">
        <Viewport />
        <ViewCube />
        {/* on-canvas distance field */}
        <div className="absolute top-[264px] left-[460px] flex h-[15px] w-[63px] items-center gap-1 bg-[#bcbac6] pl-[7px]">
          <input
            aria-label="Extrude distance"
            value={distance}
            onChange={e => setDistance(e.target.value)}
            className="h-[11px] w-[45px] border border-[#777] bg-white text-center text-[8px] outline-none"
          />
          <button aria-label="Distance options"><Caret /></button>
        </div>
        <div className="relative w-fit pt-[3px] pl-[3px]">
          <Ribbon />
        </div>
        <div className="relative flex flex-1 justify-between pl-[3px]">
          <div className="pt-[3px] text-[8px] text-[#3c3c3c]">
            <PanelBar title="BROWSER" open />
            <ul className="mt-1 flex h-[279px] flex-col justify-between">
              {nodes.map(n => <TreeRow key={n.label} node={n} />)}
            </ul>
          </div>
          <ExtrudePanel distance={distance} onDistance={setDistance} />
        </div>
        <div className="relative grid grid-cols-[1fr_auto_1fr] items-center px-[3px] pb-[3px]">
          <PanelBar title="COMMENTS" open={false} />
          <NavTools />
          <p className="z-20 justify-self-end pr-[22px] text-[8px] font-bold text-[#222]">Multiple selections</p>
        </div>
      </main>
      <Timeline />
      <div className="pointer-events-none absolute right-10 bottom-6 font-['Open_Sans',sans-serif] text-[#999]/80">
        <p className="text-[13px] leading-[18px]">Activate Windows</p>
        <p className="text-[10px] leading-[14px]">Go to Settings to activate Windows.</p>
      </div>
    </div>
  );
}
